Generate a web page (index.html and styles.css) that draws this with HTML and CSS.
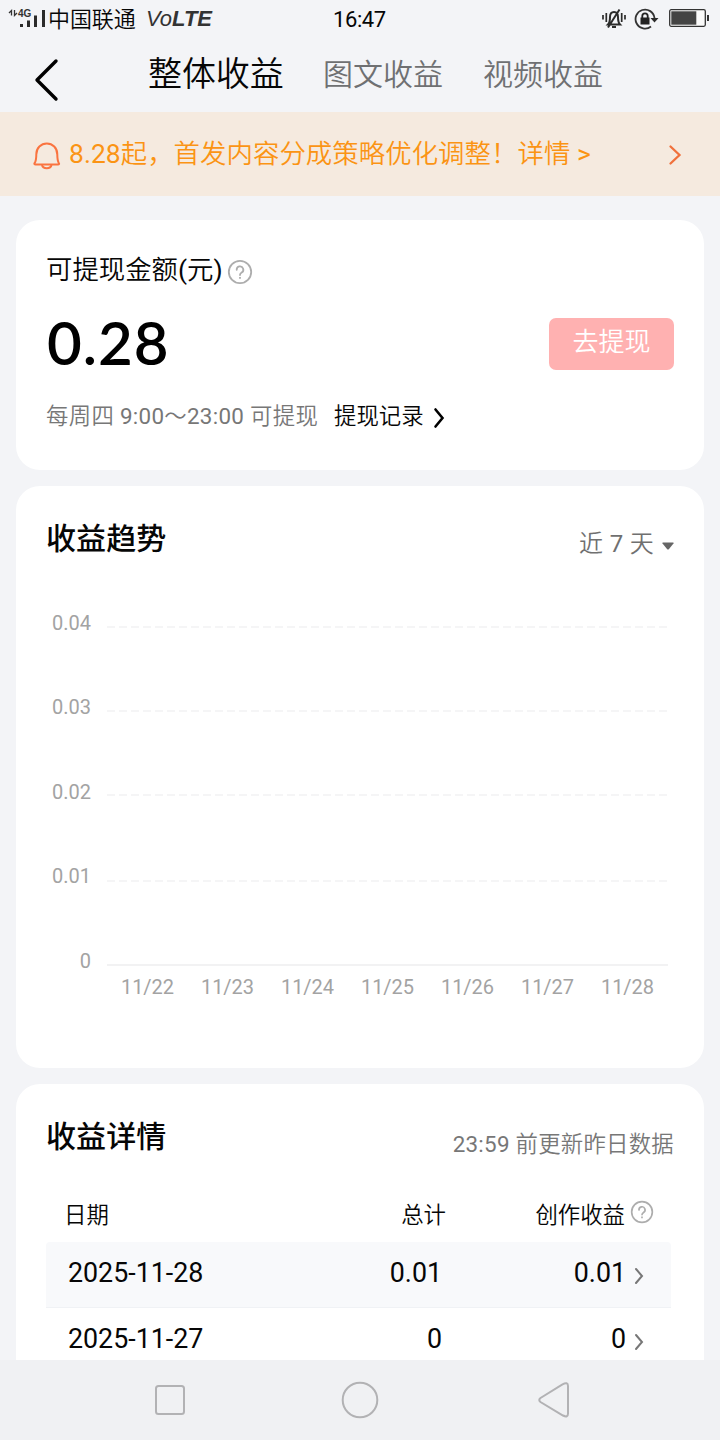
FILE: index.html
```
<!DOCTYPE html>
<html lang="zh-CN">
<head>
<meta charset="utf-8">
<title>整体收益</title>
<link rel="stylesheet" href="styles.css">
</head>
<body>
<div class="screen">
  <div class="status">
    <svg class="signal" width="38" height="27" viewBox="0 -3 38 27">
      <path d="M2.500 6.500V1.500L0 4M5.500 1v5.500L8 4" fill="none" stroke="#333" stroke-width="1.300"/>
      <text x="9" y="7.500" class="net">4G</text>
      <path d="M11 15h3v3h-3zM18 11.500h3v6.500h-3zM25 6.500h3v11.500h-3zM33 1h3v17h-3z" fill="#2b2b2b"/>
    </svg>
    <span class="carrier">中国联通</span>
    <span class="volte">Vo<b>LTE</b></span>
    <span class="clock">16:47</span>
    <div class="sysicons">
      <svg width="24" height="22" viewBox="0 0 24 22" fill="none" stroke="#2b2b2b" stroke-width="2">
        <path d="M6 16.500c1.500-1.500 2-3 2-7.500 0-3 1.500-5 4-5s4 2 4 5c0 4.500.5 6 2 7.500zM17.500 1.500L6 19.500M10 19h4"/>
        <path d="M1 7v4.500M4.300 5v9M23 7v4.500M19.700 5v9" stroke-width="1.700"/>
      </svg>
      <svg width="26" height="22" viewBox="0 0 26 22">
        <path d="M17 18.500A9.500 9.500 0 1 1 20.500 10" fill="none" stroke="#333" stroke-width="1.800"/>
        <path d="M16.500 10h8l-4 4.500z" fill="#2b2b2b"/>
        <path d="M6.500 9.500h9v7h-9z" fill="#222"/>
        <path d="M8.300 10V8a2.700 2.700 0 0 1 5.400 0v2" fill="none" stroke="#222" stroke-width="1.800"/>
      </svg>
      <svg class="battery" width="40" height="18" viewBox="0 0 40 18">
        <rect x=".7" y=".7" width="35.600" height="16.600" rx="1.500" fill="#fafafa" stroke="#333" stroke-width="1.300"/>
        <path d="M2.300 2.300h25v13.400h-25z" fill="#444"/>
        <path d="M38 6h2v6h-2z" fill="#333"/>
      </svg>
    </div>
  </div>

  <header class="header">
    <svg class="back" width="26" height="44" viewBox="0 0 26 44"><path d="M23 3L4 22 23 41" fill="none" stroke="#000" stroke-width="3.400" stroke-linecap="round" stroke-linejoin="round"/></svg>
    <nav class="tabs">
      <span class="tab active">整体收益</span>
      <span class="tab">图文收益</span>
      <span class="tab">视频收益</span>
    </nav>
  </header>

  <div class="notice">
    <svg class="bell" width="28" height="32" viewBox="0 0 28 32" fill="none" stroke="#fa7440" stroke-width="2" stroke-linejoin="round">
      <path d="M2.500 25.500C1.500 25.500 1 24.800 1.700 24 3 22 3.300 19.500 3.300 15.500 3.300 9 8 4.500 13.800 4.500S24.300 9 24.300 15.500c0 4 .3 6.500 1.500 8.500.6.800.2 1.500-.8 1.500z"/>
      <path d="M9 26c.8 4.200 8.700 4.200 9.500 0"/>
    </svg>
    <span class="notice-text">8.28起，首发内容分成策略优化调整！详情 &gt;</span>
    <svg class="notice-arrow" width="14" height="22" viewBox="0 0 14 22"><path d="M2.500 2.500L11.500 11l-9 8.500" fill="none" stroke="#f0713c" stroke-width="2.300" stroke-linecap="round"/></svg>
  </div>

  <main class="content">
    <section class="card balance">
      <div class="balance-title">
        <span>可提现金额(元)</span>
        <svg class="help" width="26" height="26" viewBox="0 0 26 26" fill="none" stroke="#adadad" stroke-width="1.800"><circle cx="13" cy="13" r="11.200"/><path d="M9.700 10.800a3.300 3.300 0 1 1 5 2.700c-1.200.8-1.700 1.300-1.700 2.500" stroke-linecap="round"/><path d="M13 18v1.800"/></svg>
      </div>
      <div class="balance-row">
        <span class="amount">0.28</span>
        <button class="withdraw">去提现</button>
      </div>
      <div class="balance-foot">
        <span class="hint">每周四 9:00～23:00 可提现</span>
        <span class="record">提现记录</span>
        <svg class="record-arrow" width="14" height="22" viewBox="0 0 14 22"><path d="M3.500 2.500L10.500 11l-7 8.500" fill="none" stroke="#000" stroke-width="2.600" stroke-linecap="round"/></svg>
      </div>
    </section>

    <section class="card trend">
      <div class="card-head">
        <h2>收益趋势</h2>
        <div class="range"><span>近 7 天</span><svg width="12" height="8" viewBox="0 0 12 8"><path d="M1 .5h10q1 0 .5 1L7 7q-1 1-2 0L.5 1.500Q0 .5 1 .5z" fill="#666"/></svg></div>
      </div>
      <div class="chart">
        <div class="y-axis"><span>0.04</span><span>0.03</span><span>0.02</span><span>0.01</span><span>0</span></div>
        <div class="plot">
          <svg width="561" height="342" viewBox="0 0 561 342" fill="none" stroke="#f5f5f6" stroke-width="2">
            <path d="M0 2h561M0 86h561M0 170h561M0 256h561" stroke-dasharray="8 4"/>
            <path d="M0 340h561" stroke="#f2f2f3"/>
          </svg>
          <div class="x-axis"><span>11/22</span><span>11/23</span><span>11/24</span><span>11/25</span><span>11/26</span><span>11/27</span><span>11/28</span></div>
        </div>
      </div>
    </section>

    <section class="card detail">
      <div class="card-head">
        <h2>收益详情</h2>
        <span class="update">23:59 前更新昨日数据</span>
      </div>
      <div class="row head">
        <span class="date">日期</span>
        <span class="total">总计</span>
        <span class="earn">创作收益</span>
        <svg class="help-sm" width="24" height="24" viewBox="0 0 26 26" fill="none" stroke="#adadad" stroke-width="1.800"><circle cx="13" cy="13" r="11.200"/><path d="M9.700 10.800a3.300 3.300 0 1 1 5 2.700c-1.200.8-1.700 1.300-1.700 2.500" stroke-linecap="round"/><path d="M13 18v1.800"/></svg>
      </div>
      <div class="row data shade">
        <span class="date">2025-11-28</span>
        <span class="total">0.01</span>
        <span class="earn">0.01</span>
        <svg class="row-arrow" width="12" height="20" viewBox="0 0 12 20"><path d="M3 3L9 10l-6 7" fill="none" stroke="#777" stroke-width="2" stroke-linecap="round"/></svg>
      </div>
      <div class="row data">
        <span class="date">2025-11-27</span>
        <span class="total">0</span>
        <span class="earn">0</span>
        <svg class="row-arrow" width="12" height="20" viewBox="0 0 12 20"><path d="M3 3L9 10l-6 7" fill="none" stroke="#777" stroke-width="2" stroke-linecap="round"/></svg>
      </div>
    </section>
  </main>

  <footer class="sysnav">
    <svg width="40" height="40" viewBox="0 0 40 40"><rect x="6" y="6" width="28" height="28" rx="2.500"/></svg>
    <svg width="40" height="40" viewBox="0 0 40 40"><circle cx="20" cy="20" r="17.300"/></svg>
    <svg width="40" height="40" viewBox="0 0 40 40"><path d="M10.500 18L32.500 4.300Q38 1.500 38 6V33.500Q38 38 33 35.500L10.500 22Q8 20 10.500 18z"/></svg>
  </footer>
</div>
</body>
</html>
```
FILE: styles.css
```
* { box-sizing: border-box; }
body {
  margin: 0;
  background: #f3f4f7;
  font-family: Roboto, "Noto Sans CJK SC DemiLight", "Noto Sans CJK SC", sans-serif;
  color: #060606;
}
svg { display: block; flex: none; }
span { white-space: nowrap; }
.screen {
  width: 720px;
  height: 1440px;
  display: flex;
  flex-direction: column;
  overflow: hidden;
}

.status {
  height: 39px;
  display: flex;
  align-items: flex-start;
  padding-left: 9px;
  font-size: 22px;
  line-height: 39px;
  flex: none;
}
.signal { margin-top: 6px; overflow: visible; }
.net { font: bold 10px "Liberation Sans", sans-serif; fill: #333; }
.carrier { width: 99px; padding: 0 0 0 1px; letter-spacing: -0.1px; }
.volte {
  width: 187px;
  font: italic 22px/38px "Liberation Sans", sans-serif;
  color: #333;
}
.clock { width: 269px; letter-spacing: -0.4px; }
.sysicons { display: flex; padding-top: 8px; }
.sysicons svg + svg { margin-left: 8px; }
.sysicons .battery { margin: 1px 0 0 9px; }

.header {
  height: 73px;
  display: flex;
  padding-left: 33px;
  flex: none;
}
.back { margin-top: 19px; }
.tabs { display: flex; gap: 40px; padding-left: 89px; }
.tab { font-size: 30px; line-height: 72px; color: #6f7072; }
.tab.active { font-size: 34px; line-height: 70px; color: #060606; letter-spacing: -0.1px; margin-right: -0.600px; }

.notice {
  height: 84px;
  display: flex;
  align-items: flex-start;
  padding-left: 33px;
  background: #f5eadf;
  flex: none;
}
.bell { margin: 27px 8px 0 0; }
.notice-text {
  width: 599px;
  font-size: 26.400px;
  letter-spacing: 0.06px;
  line-height: 84px;
  color: #fb9414;
}
.notice-arrow { margin-top: 32px; }

.content {
  flex: 1;
  min-height: 0;
  overflow: hidden;
  padding: 24px 16px 0;
  display: flex;
  flex-direction: column;
  gap: 16px;
}
.card {
  flex: none;
  background: #fff;
  border-radius: 24px;
  padding: 0 30px;
}
.balance { height: 250px; padding-top: 24px; }
.balance-title { display: flex; height: 50px; font-size: 26.400px; line-height: 52px; }
.help { margin: 15px 0 0 4px; }
.balance-row { display: flex; justify-content: space-between; height: 92px; padding-top: 8px; }
.amount {
  padding-left: 1px;
  font: 600 60px/80px Lato, sans-serif;
  letter-spacing: 1px;
  color: #000;
}
.withdraw {
  width: 125px;
  height: 52px;
  margin-top: 16px;
  padding: 0;
  border: 0;
  border-radius: 7px;
  background: #ffb1b1;
  color: #fff;
  font: 26px/49px Roboto, "Noto Sans CJK SC DemiLight", "Noto Sans CJK SC", sans-serif;
  display: flex;
  justify-content: center;
}
.balance-foot { display: flex; font-size: 22.400px; line-height: 61px; }
.hint { width: 288px; color: #777; letter-spacing: 0.3px; }
.record-arrow { margin: 21px 0 0 8px; }

.card-head { display: flex; justify-content: space-between; }
h2 {
  margin: 0;
  font-family: Roboto, "Noto Sans CJK SC", sans-serif;
  font-size: 30px;
  font-weight: 500;
  letter-spacing: 0.1px;
  line-height: 60px;
}
.trend { height: 582px; padding-top: 23px; }
.range { display: flex; font-size: 24px; line-height: 71px; color: #707070; letter-spacing: 0.3px; }
.range svg { margin: 33px 0 0 8px; }
.trend .card-head { height: 70px; }
.chart { display: flex; padding-top: 30px; }
.y-axis {
  width: 45px;
  display: flex;
  flex-direction: column;
  align-items: flex-end;
  font-size: 20px;
  color: #a3a3a3;
}
.y-axis span { height: 84.450px; line-height: 28px; }
.plot { padding: 16px 0 0 16px; }
.x-axis {
  display: grid;
  grid-template-columns: repeat(7, 80px);
  text-align: center;
  font-size: 20px;
  line-height: 40px;
  color: #a3a3a3;
  padding-left: 0.5px;
}

.detail { height: 400px; padding-top: 23px; }
.detail .card-head { height: 74px; }
.update { font-size: 22.400px; line-height: 75px; color: #777; letter-spacing: 0.25px; }
.row {
  display: grid;
  grid-template-columns: 130px 1fr 180px 45px;
  width: 625px;
}
.total, .earn { text-align: right; }
.head { height: 61px; padding-left: 18px; font-size: 22.400px; line-height: 68px; }
.head .earn { padding-right: 1px; }
.help-sm { margin: 19px 0 0 4px; }
.data {
  height: 66px;
  padding-left: 22px;
  font-size: 26.800px;
  line-height: 62px;
}
.data .total { padding-right: 4px; }
.row-arrow { margin: 24px 0 0 7px; }
.shade { background: #f8f9fb; border-bottom: 1px solid #f0f2f5; border-radius: 4px 4px 0 0; }

.sysnav {
  height: 80px;
  flex: none;
  background: #f0f1f3;
  display: flex;
  justify-content: center;
  align-items: center;
  gap: 150px;
}
.sysnav svg { fill: none; stroke: #b2b2b4; stroke-width: 2; }
```
